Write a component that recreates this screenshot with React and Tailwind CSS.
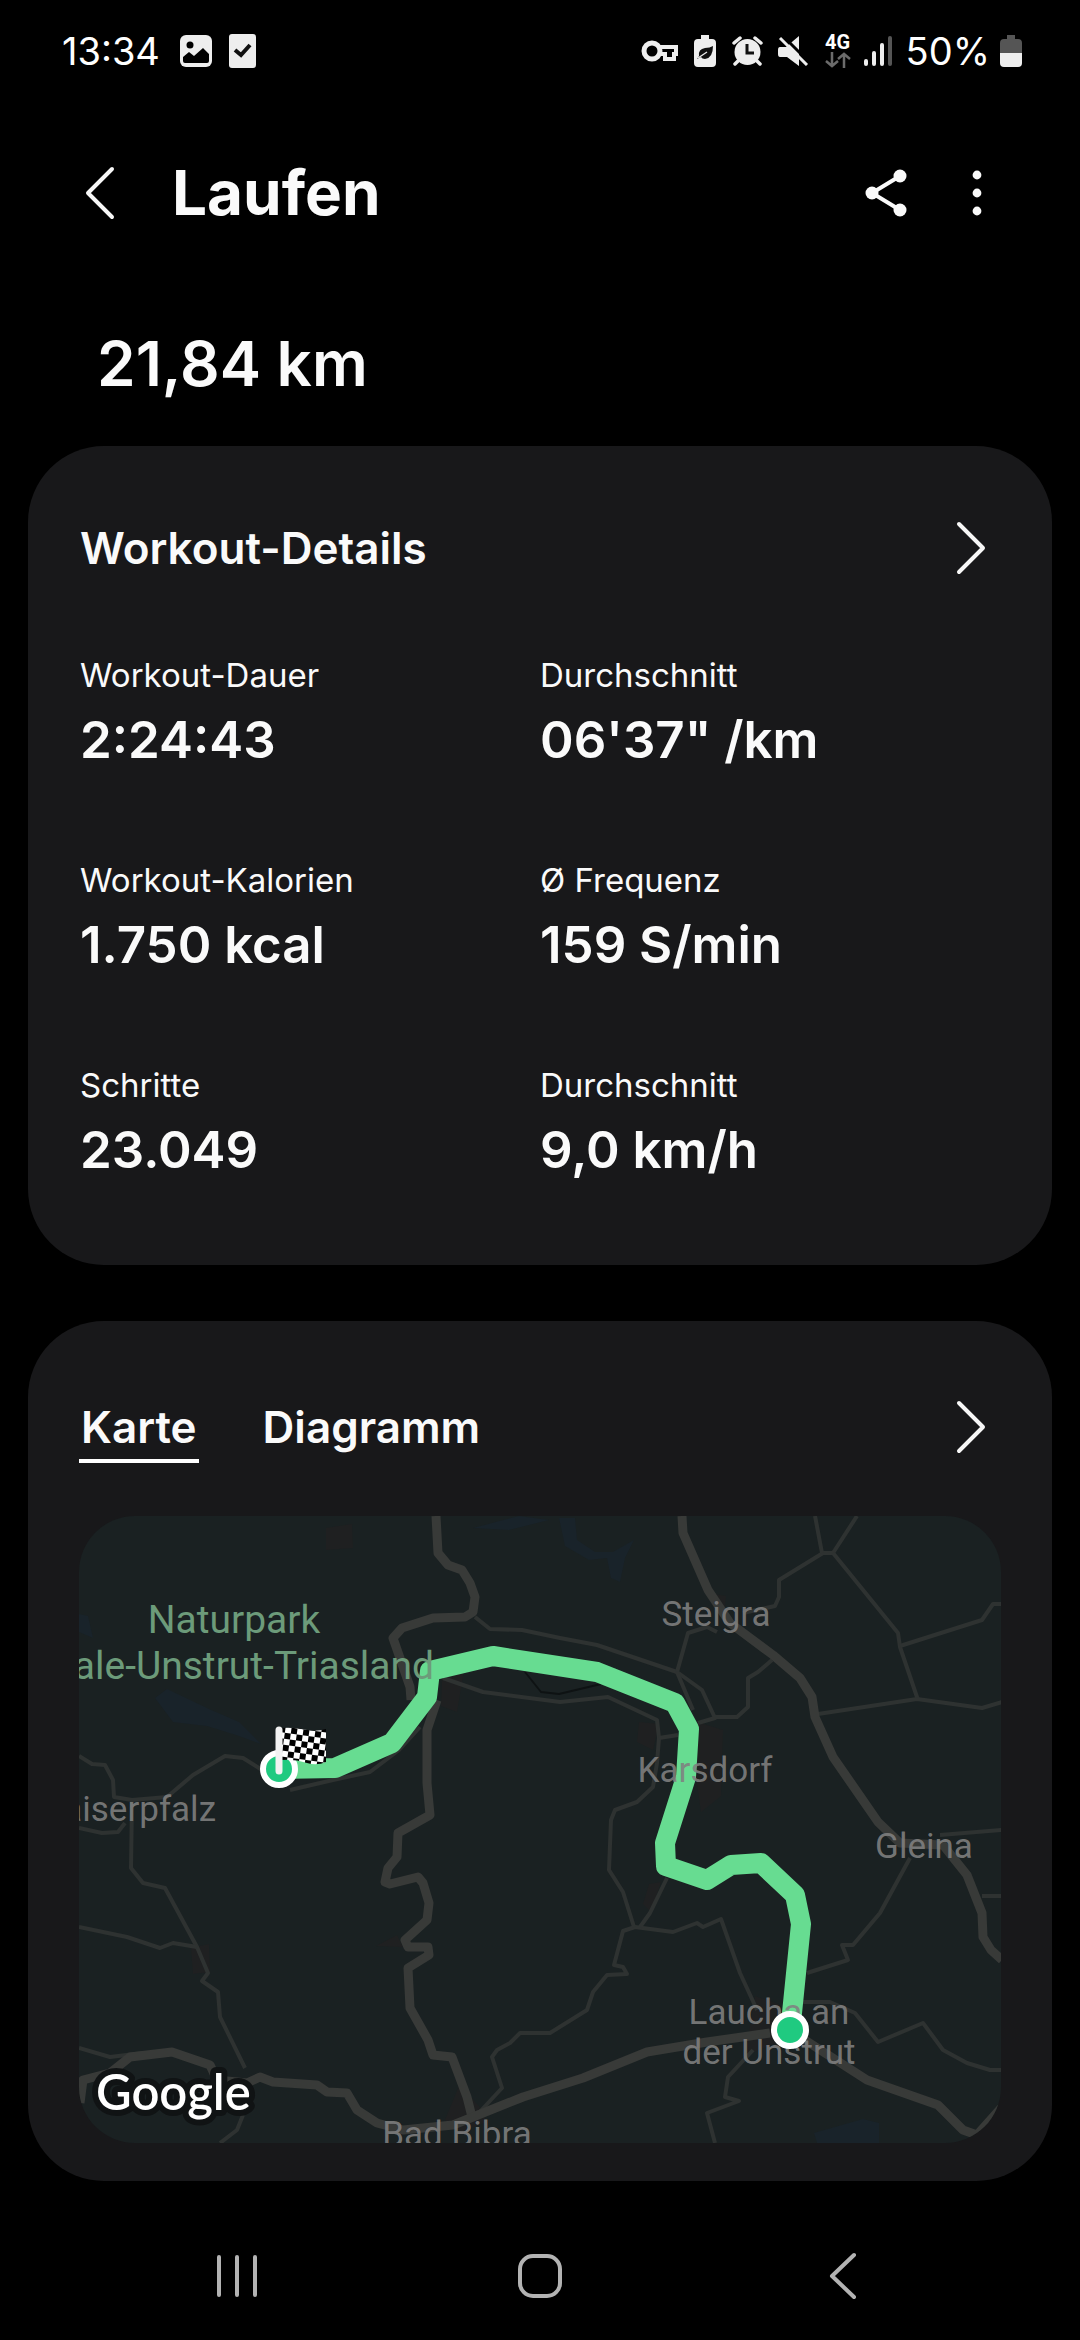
import React, { useState } from 'react';

// Key figures of the workout, in reading order
const details = [
  { label: 'Workout-Dauer', value: '2:24:43' },
  { label: 'Durchschnitt', value: '06\'37" /km' },
  { label: 'Workout-Kalorien', value: '1.750 kcal' },
  { label: 'Ø Frequenz', value: '159 S/min' },
  { label: 'Schritte', value: '23.049' },
  { label: 'Durchschnitt', value: '9,0 km/h' },
];

const tabs = ['Karte', 'Diagramm'];

// Map geometry
const mainRoads = [
  'M357 0 L359 37 L369 49 L383 54 L391 67 L396 81 L394 96 L386 101 L354 102 L323 112 L314 122 L331 171 L332 184',
  'M358 184 L348 214 L348 267 L351 299 L319 317 L318 341 L309 352 L306 366 L311 368 L339 361 L344 367 L350 387 L348 404 L326 424 L329 431 L349 431 L350 439 L329 452 L331 492 L349 524 L354 539 L373 541 L388 581 L393 601',
  'M1 587 L4 564 L31 557 L51 541 L93 536 L131 549 L138 564 L168 567 L181 561 L194 566 L238 569 L248 576 L268 577 L278 594 L298 607 L324 614 L374 609 L394 601 L444 581 L504 562 L568 536 L628 526 L691 517',
  'M603 0 L604 17 L629 74 L651 107 L694 139 L721 162 L733 181 L736 201 L754 241 L799 306 L821 327 L864 329 L888 359 L903 397 L904 421 L912 434 L923 444',
  'M718 519 L788 564 L859 589 L884 614 L898 619 L923 591',
];

const sideRoads = [
  'M0 240 L13 248 L26 249 L34 264 L35 281 L53 284 L88 281 L114 259 L146 240 L164 242 L183 254',
  'M0 312 L23 317 L39 316 L46 307',
  'M53 284 L52 352 L64 367 L86 372 L118 431 L129 457 L123 465 L139 476 L141 501 L166 552',
  'M0 411 L48 421 L81 432 L94 427 L118 431',
  'M0 532 L31 541 L64 537',
  'M141 627 L158 614 L164 599',
  'M396 601 L423 572 L413 541 L418 534 L431 527 L441 517 L471 517 L508 494 L514 476 L528 459 L548 458 L544 451 L535 449 L544 415 L556 411 L594 416 L618 407 L624 411 L642 403 L661 457 L678 494',
  'M561 411 L571 397 L588 362',
  'M555 411 L544 376 L530 354 L532 304 L536 294 L558 286 L574 271 L578 247 L580 222 L578 204 L529 181 L481 186 L404 176 L364 162',
  'M580 222 L599 219',
  'M396 101 L411 113 L443 114 L481 122 L518 129 L598 156 L623 174 L636 202 L619 207',
  'M598 156 L609 117 L628 111 L638 116',
  'M598 156 L614 194',
  'M636 201 L658 201 L669 191 L669 162 L679 156 L693 144',
  'M664 97 L696 90 L700 81 L700 64 L744 37 L754 37 L778 0',
  'M736 0 L743 37',
  'M754 37 L819 117 L821 131 L839 184',
  'M821 130 L903 104 L914 88 L923 88',
  'M739 198 L838 183 L903 192 L923 186',
  'M923 314 L861 319',
  'M831 342 L801 397 L774 429 L763 429 L769 444 L728 457',
  'M724 486 L751 486 L776 497 L799 526 L844 507 L864 534 L888 547 L911 554 L923 554',
  'M674 534 L649 561 L646 581 L660 585 L628 597 L636 627',
  'M903 380 L923 380',
  'M211 274 L254 264 L291 256 L320 234 L341 211',
];

const waters = [
  'M76 182 L88 173 L130 193 L160 206 L182 228 L160 220 L128 210 L94 206 Z',
  'M480 2 L496 2 L498 24 L516 36 L534 36 L555 24 L546 42 L541 66 L532 62 L528 42 L510 44 L486 30 Z',
  'M735 617 L784 603 L800 607 L800 627 L738 627 Z',
  'M0 98 L9 100 L14 122 L0 116 Z',
  'M394 12 L440 0 L470 4 L430 14 Z',
];

const towns = [
  'M247 12 L273 8 L274 32 L247 34 Z',
  'M634 78 L647 80 L646 92 L636 90 Z',
  'M364 142 L386 148 L378 196 L362 190 Z',
  'M618 206 L644 214 L642 280 L622 296 L614 240 Z',
  'M560 206 L580 208 L574 234 L558 226 Z',
  'M297 430 L318 419 L324 431 Z',
  'M112 432 L130 428 L131 456 L114 458 Z',
  'M380 570 L400 590 L408 606 L382 616 L366 604 Z',
  'M570 368 L582 366 L572 396 L564 388 Z',
  'M676 480 L700 488 L712 520 L690 530 L666 540 Z',
];

const route =
  'M200 253 L256 252 L313 227 L348 181 L351 155 L414 140 L518 156 L596 187 L610 213 L607 261 L586 327 L587 350 L628 364 L652 349 L682 347 L716 379 L722 408 L713 497 L711 514';

const Chevron = () => (
  <svg className="h-[56px] w-[32px]" viewBox="0 0 32 56" fill="none" stroke="#f7f7f7" strokeWidth="4" strokeLinecap="round" strokeLinejoin="round">
    <path d="M4 4 L28 28 L4 52" />
  </svg>
);

const StatusBar = () => (
  <div className="flex h-[102px] items-center justify-between pl-[62px] pr-[58px] text-[38px] text-white">
    <div className="flex items-center">
      <span>13:34</span>
      <svg className="ml-[20px] h-[32px] w-[32px]" viewBox="0 0 32 32">
        <rect x="0" y="0" width="32" height="32" rx="6" fill="#eee" />
        <circle cx="10" cy="10" r="3.5" fill="#000" />
        <path d="M3 22 L9 17 L14 21 L23 13 L29 19 V26 Q29 28 27 28 H5 Q3 28 3 26 Z" fill="#000" />
      </svg>
      <svg className="ml-[17px] h-[34px] w-[27px]" viewBox="0 0 27 34">
        <rect x="0" y="0" width="27" height="34" rx="3" fill="#eee" />
        <path d="M6 16 L12 21 L21 11" fill="none" stroke="#111" strokeWidth="4" />
      </svg>
    </div>

    <div className="flex items-center">
      {/* VPN key */}
      <svg className="h-[24px] w-[38px]" viewBox="0 0 38 24" fill="none" stroke="#eee" strokeWidth="5">
        <circle cx="11" cy="12" r="8" />
        <path d="M18 8 H37" strokeWidth="4" />
        <path d="M18 15 H24 V20 H33 V15 H37 M35 7 V17" strokeWidth="4" />
      </svg>
      {/* power saving */}
      <svg className="ml-[15px] h-[32px] w-[22px]" viewBox="0 0 22 32">
        <path d="M7 0 H15 V4 H18 Q22 4 22 8 V28 Q22 32 18 32 H4 Q0 32 0 28 V8 Q0 4 4 4 H7 Z" fill="#eee" />
        <path d="M19 11 Q19 23 11 24 Q8 24 7 22 L3 24 L5 21 Q4 14 11 13 Q16 13 19 11 Z" fill="#111" />
        <path d="M4 23 L13 17" stroke="#eee" strokeWidth="1.4" />
      </svg>
      {/* alarm */}
      <svg className="ml-[16px] h-[30px] w-[31px]" viewBox="0 0 31 30">
        <circle cx="15.5" cy="16" r="13" fill="#eee" />
        <path d="M2 7 L8 2 M29 7 L23 2" stroke="#eee" strokeWidth="3.5" strokeLinecap="round" />
        <path d="M6 25 L3 28 M25 25 L28 28" stroke="#eee" strokeWidth="3.5" strokeLinecap="round" />
        <path d="M15 8 V17 H22" fill="none" stroke="#111" strokeWidth="3" />
      </svg>
      {/* sound off */}
      <svg className="ml-[15px] h-[30px] w-[31px]" viewBox="0 0 31 30">
        <path d="M2 11 H8 L21 0 V30 L9 21 H2 Q0 21 0 18 V14 Q0 11 2 11 Z" fill="#eee" />
        <path d="M5 0 L32 27" stroke="#000" strokeWidth="3" />
        <path d="M2 2 L29 29" stroke="#eee" strokeWidth="3" />
      </svg>
      <div className="ml-[16px] flex flex-col items-center">
        <span className="font-['Roboto',sans-serif] text-[20px] leading-[16px] font-bold">4G</span>
        <svg className="mt-[2px] h-[16px] w-[26px]" viewBox="0 0 26 16" fill="none" stroke="#6b6b6b" strokeWidth="2.5">
          <path d="M7 0 V14 M1 9 L7 14 L13 9" />
          <path d="M19 16 V2 M13 7 L19 2 L25 7" />
        </svg>
      </div>
      <svg className="ml-[13px] h-[30px] w-[28px]" viewBox="0 0 28 30" strokeWidth="4" strokeLinecap="round" stroke="#eee">
        <path d="M2 25 V28 M10 17 V28 M18 9 V28" />
        <path d="M26 2 V28" stroke="#555" />
      </svg>
      <span className="ml-[14px]">50%</span>
      <svg className="ml-[10px] h-[32px] w-[22px]" viewBox="0 0 22 32">
        <path d="M7 0 H15 V4 H18 Q22 4 22 8 V18 H0 V8 Q0 4 4 4 H7 Z" fill="#555" />
        <path d="M0 18 H22 V28 Q22 32 18 32 H4 Q0 32 0 28 Z" fill="#eee" />
      </svg>
    </div>
  </div>
);

const RouteMap = () => (
  <svg
    className="mt-[53px] block w-full rounded-[56px] bg-[#1a2122]"
    viewBox="0 0 922 627"
    role="img"
    aria-label="Karte"
    fontFamily="Roboto, sans-serif"
  >
    <defs>
      <pattern id="checker" width="12" height="12" patternUnits="userSpaceOnUse" patternTransform="rotate(8)">
        <rect width="12" height="12" fill="#fff" />
        <rect width="6" height="6" fill="#000" />
        <rect x="6" y="6" width="6" height="6" fill="#000" />
      </pattern>
    </defs>

    {waters.map((d) => (
      <path key={d} d={d} fill="#19232a" />
    ))}
    {towns.map((d) => (
      <path key={d} d={d} fill="#1f2021" />
    ))}
    <g fill="none" strokeLinejoin="round">
      {sideRoads.map((d) => (
        <path key={d} d={d} stroke="#2e3231" strokeWidth="4" />
      ))}
      {mainRoads.map((d) => (
        <path key={d} d={d} stroke="#383a38" strokeWidth="9" />
      ))}
      <path d="M446 156 L462 176 L480 178 L522 168" stroke="#0e1213" strokeWidth="2" />
      <path d={route} stroke="#67dc91" strokeWidth="20" />
    </g>

    {/* place names */}
    <g fill="#6c9b7a" fontSize="39" textAnchor="middle">
      <text x="155" y="117">Naturpark</text>
      <text x="355" y="163" textAnchor="end">Saale-Unstrut-Triasland</text>
    </g>
    <g fill="#808080" fillOpacity="0.9" fontSize="35" textAnchor="middle">
      <text x="637" y="110">Steigra</text>
      <text x="626" y="266">Karsdorf</text>
      <text x="137" y="305" textAnchor="end">Kaiserpfalz</text>
      <text x="845" y="342">Gleina</text>
      <text x="690" y="508">Laucha an</text>
      <text x="690" y="548">der Unstrut</text>
      <text x="378" y="630">Bad Bibra</text>
    </g>

    {/* start */}
    <circle cx="711" cy="514" r="16" fill="#1fca80" stroke="#fff" strokeWidth="6" />

    {/* finish */}
    <circle cx="200" cy="253" r="16" fill="#1fca80" stroke="#fff" strokeWidth="6" />
    <path d="M203 212 Q216 211 228 214 Q238 216 247 213 V246 Q238 250 228 247 Q216 243 203 244 Z" fill="url(#checker)" />
    <path d="M200 214 V255" stroke="#f2f2f2" strokeWidth="7" strokeLinecap="round" />

    <text
      x="17"
      y="594"
      fontFamily="Lato, sans-serif"
      fontSize="49"
      fontWeight="600"
      fill="#fff"
      stroke="#101314"
      strokeWidth="12"
      strokeLinejoin="round"
      paintOrder="stroke"
    >
      Google
    </text>
  </svg>
);

const App = () => {
  const [activeTab, setActiveTab] = useState('Karte');

  return (
    <div className="flex min-h-screen flex-col bg-black font-['Inter',sans-serif] text-[#fafafa]">
      <StatusBar />

      <header className="flex h-[182px] items-center pl-[84px] pr-[94px]">
        <button aria-label="Zurück">
          <svg className="h-[56px] w-[32px]" viewBox="0 0 32 56" fill="none" stroke="#f7f7f7" strokeWidth="4" strokeLinecap="round" strokeLinejoin="round">
            <path d="M28 4 L4 28 L28 52" />
          </svg>
        </button>
        <h1 className="ml-[56px] text-[62px] leading-[80px] font-bold">Laufen</h1>
        <button aria-label="Teilen" className="ml-auto">
          <svg className="h-[48px] w-[42px]" viewBox="0 0 42 48">
            <path d="M35 7 L7 24 L35 41" fill="none" stroke="#fafafa" strokeWidth="4" />
            <circle cx="35" cy="7" r="6.5" fill="#fafafa" />
            <circle cx="7" cy="24" r="6.5" fill="#fafafa" />
            <circle cx="35" cy="41" r="6.5" fill="#fafafa" />
          </svg>
        </button>
        <button aria-label="Weitere Optionen" className="ml-[61px]">
          <svg className="h-[48px] w-[18px]" viewBox="0 0 18 48" fill="#fafafa">
            <circle cx="9" cy="6" r="4.4" />
            <circle cx="9" cy="24" r="4.4" />
            <circle cx="9" cy="42" r="4.4" />
          </svg>
        </button>
      </header>

      <p className="mt-[40px] px-[97px] text-[62px] leading-[80px] font-semibold">21,84 km</p>

      <main className="mt-[42px] flex flex-col gap-[56px] px-[28px]">
        <section className="rounded-[76px] bg-[#18181a] px-[52px] pt-[70px] pb-[83px]">
          <div className="flex h-[64px] items-center justify-between">
            <h2 className="text-[44px] font-semibold">Workout-Details</h2>
            <button aria-label="Workout-Details öffnen" className="mr-[13px]">
              <Chevron />
            </button>
          </div>
          <dl className="mt-[73px] grid grid-cols-2 gap-y-[86px]">
            {details.map((item, index) => (
              <div key={index}>
                <dt className="text-[33px] leading-[44px]">{item.label}</dt>
                <dd className="mt-[11px] text-[51px] leading-[64px] font-semibold">{item.value}</dd>
              </div>
            ))}
          </dl>
        </section>

        <section className="rounded-[76px] bg-[#18181a] px-[51px] pt-[69px] pb-[38px]">
          <div className="flex h-[73px] items-center">
            <div role="tablist" className="flex h-full gap-[62px]">
              {tabs.map((tab) => (
                <button
                  key={tab}
                  role="tab"
                  aria-selected={activeTab === tab}
                  onClick={() => setActiveTab(tab)}
                  className={`border-y-4 border-t-transparent px-[2px] text-[44px] font-semibold ${
                    activeTab === tab ? 'border-b-white' : 'border-b-transparent'
                  }`}
                >
                  {tab}
                </button>
              ))}
            </div>
            <button aria-label="Karte öffnen" className="mr-[14px] ml-auto">
              <Chevron />
            </button>
          </div>
          <RouteMap />
        </section>
      </main>

      <nav className="mt-auto grid h-[128px] grid-cols-3 items-center px-[86px]">
        <button aria-label="Letzte Apps" className="justify-self-center">
          <svg className="h-[44px] w-[44px]" viewBox="0 0 44 44" stroke="#b3b3b3" strokeWidth="4" strokeLinecap="round">
            <path d="M4 3 V41 M22 3 V41 M40 3 V41" />
          </svg>
        </button>
        <button aria-label="Startseite" className="justify-self-center">
          <svg className="h-[44px] w-[44px]" viewBox="0 0 44 44" fill="none" stroke="#b3b3b3" strokeWidth="4">
            <rect x="2" y="2" width="40" height="40" rx="13" />
          </svg>
        </button>
        <button aria-label="Zurück zur vorherigen App" className="justify-self-center">
          <svg className="h-[48px] w-[30px]" viewBox="0 0 30 48" fill="none" stroke="#b3b3b3" strokeWidth="4" strokeLinecap="round" strokeLinejoin="round">
            <path d="M26 3 L4 24 L26 45" />
          </svg>
        </button>
      </nav>
    </div>
  );
};

export default App;
